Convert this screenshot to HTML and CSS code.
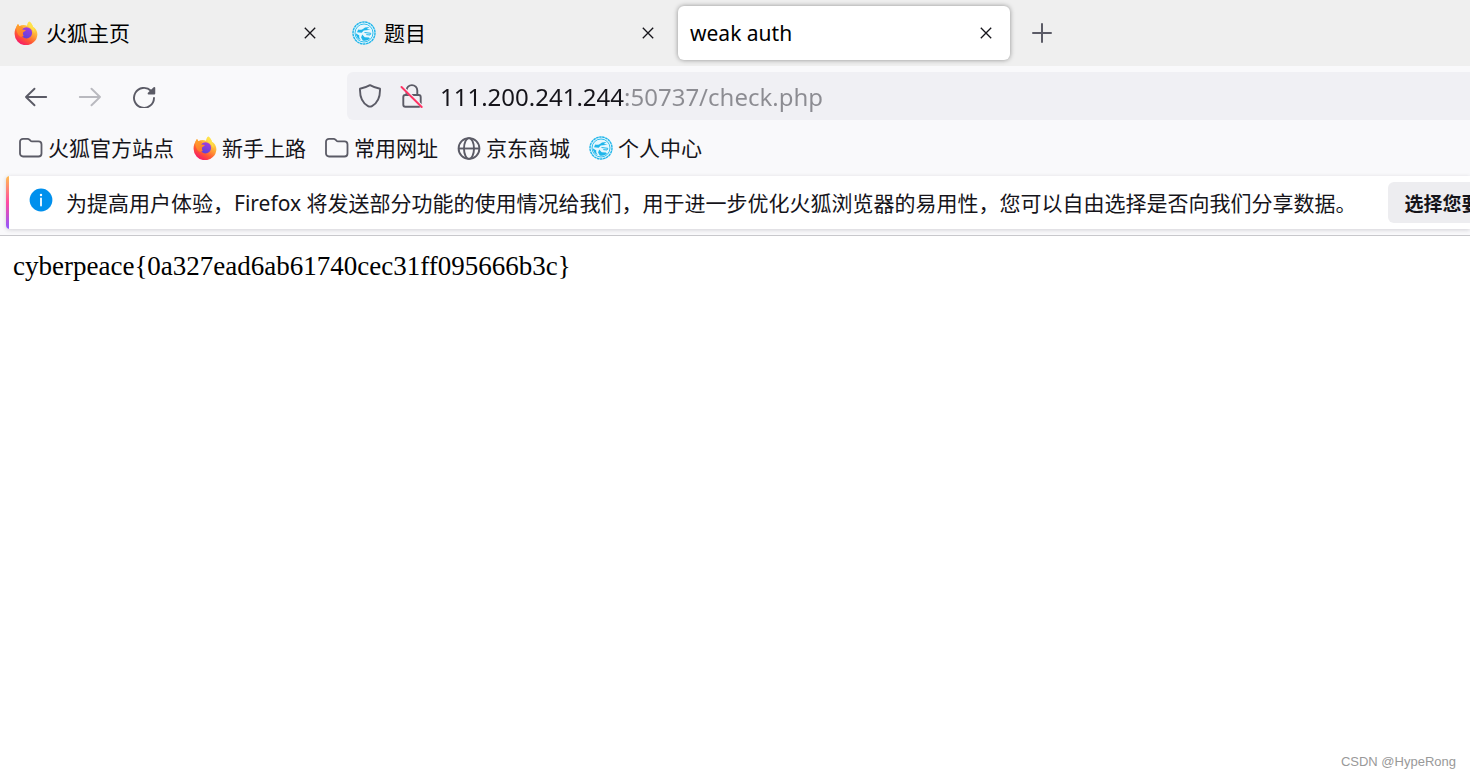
FILE: index.html
```html
<!DOCTYPE html>
<html lang="zh-CN">
<head>
    <meta charset="UTF-8">
    <meta name="viewport" content="width=device-width, initial-scale=1.0">
    <title>weak auth</title>
    <link rel="stylesheet" href="styles.css">
</head>
<body>
    <!-- shared icons -->
    <svg class="sprite" width="0" height="0" aria-hidden="true">
        <defs>
            <linearGradient id="fxBody" x1="0.85" y1="0.1" x2="0.3" y2="1">
                <stop offset="0" stop-color="#fff44f"/>
                <stop offset="0.4" stop-color="#ffa436"/>
                <stop offset="0.7" stop-color="#ff5634"/>
                <stop offset="1" stop-color="#f5156c"/>
            </linearGradient>
            <linearGradient id="fxFox" x1="0" y1="0" x2="0.3" y2="1">
                <stop offset="0" stop-color="#ffa72b"/>
                <stop offset="1" stop-color="#ff7a2c"/>
            </linearGradient>
            <linearGradient id="fxGlobe" x1="0.7" y1="0" x2="0.3" y2="1">
                <stop offset="0" stop-color="#a43be0"/>
                <stop offset="1" stop-color="#5b42d8"/>
            </linearGradient>
        </defs>
        <symbol id="firefox" viewBox="0 0 24 24">
            <path fill="url(#fxBody)" d="M15.200.4c2.600 1.700 3.300 3.800 3.700 5.300 2.700 1.300 4.500 4.400 4.500 7.500A11.400 11.300 0 0 1 .6 12.600C.5 9.600 1.400 7 2.800 5.200c.2-.9.700-1.700 1.200-2.200l1.300 2.200c2.200-1.400 5.600-1.500 7.800-.4C13.200 2.800 13.900 1.400 15.200.4z"/>
            <circle cx="12.500" cy="11.800" r="5.600" fill="url(#fxGlobe)"/>
            <path fill="url(#fxFox)" d="M2.400 5.400 4 3l1.500 2.300c1.400-.2 2.700.1 3.700.9-.7.700-1 1.400-.9 2.200l3.500.5c-.2 1.200-1.700 1.600-2.600 2.300-.4 1.400-.4 2.500.6 3.800-1.600.4-2.300 1.200-3.700.6C3.500 13.700 2.200 9.800 2.400 5.400z"/>
            <path fill="#ffe14a" fill-opacity=".8" d="M15.200.4c2.600 1.700 3.300 3.800 3.700 5.300 1.500 1.900 2 4.300 1.300 6.900-.7-3.100-2.600-4.800-4.500-6C13.700 4.900 13.900 1.600 15.200.4z"/>
        </symbol>
        <symbol id="seal" viewBox="0 0 24 24">
            <circle cx="12" cy="12" r="11" fill="#e6f7fd" stroke="#1fb5ea" stroke-width="1.400" stroke-dasharray="2.600 .5"/>
            <circle cx="12" cy="12" r="9" fill="none" stroke="#1fb5ea" stroke-width=".9"/>
            <path fill="#1fb5ea" d="M6.200 8.400c2.500 1.100 4.300 0 6.800-2l4.500-.5-2.700 2 3.900.8-7 .9-2 2.100-4.700-.5zM3.800 12.300l3.500 2.200c-.5 1.800.3 3.400 1.900 4.800-3-.9-5.200-3.600-5.400-7zM10.200 13.600l2.500 2.700 4.300.3.900 1.200c-2 1.600-4.700 2.300-7.200 1.600l-1.600-3z"/>
            <path d="M12.500 11.500l6.300.8-.8 1.700-3.700-.4" fill="none" stroke="#1fb5ea" stroke-width="1"/>
        </symbol>
        <symbol id="folder" viewBox="0 0 24 24">
            <path fill="none" stroke="#5b5b66" stroke-width="1.800" stroke-linejoin="round" d="M4 2.800h4.600c.8 0 1.300.3 1.800.8l1.100 1.100c.4.500.8.700 1.500.7h6.500a3 3 0 0 1 3 3v9.100a3 3 0 0 1-3 3H4a3 3 0 0 1-3-3V5.800a3 3 0 0 1 3-3z"/>
        </symbol>
        <symbol id="close" viewBox="0 0 12 12">
            <path d="M.8.8l10.400 10.400M11.200.8.8 11.200" fill="none" stroke="#15141a" stroke-width="1.300"/>
        </symbol>
    </svg>

    <header class="browser">
        <div class="tab-strip">
            <div class="tab">
                <svg class="icon"><use href="#firefox"/></svg>
                <span class="tab-title">火狐主页</span>
                <button class="tab-close" aria-label="关闭"><svg><use href="#close"/></svg></button>
            </div>
            <div class="tab">
                <svg class="icon"><use href="#seal"/></svg>
                <span class="tab-title">题目</span>
                <button class="tab-close" aria-label="关闭"><svg><use href="#close"/></svg></button>
            </div>
            <div class="tab tab-active">
                <span class="tab-title">weak auth</span>
                <button class="tab-close" aria-label="关闭"><svg><use href="#close"/></svg></button>
            </div>
            <button class="new-tab" aria-label="新建标签页">
                <svg width="20" height="20" viewBox="0 0 20 20"><path d="M10 1v18M1 10h18" stroke="#5b5b66" stroke-width="2" stroke-linecap="round"/></svg>
            </button>
        </div>

        <div class="nav-bar">
            <div class="nav-buttons">
                <button class="nav-button" aria-label="后退">
                    <svg class="icon" viewBox="0 0 24 24"><path d="M22.200 13H2M10.500 4.700 2 13l8.500 8.300"/></svg>
                </button>
                <button class="nav-button" aria-label="前进" disabled>
                    <svg class="icon" viewBox="0 0 24 24"><path d="M1.800 13H22M13.500 4.700 22 13l-8.500 8.300"/></svg>
                </button>
                <button class="nav-button" aria-label="刷新">
                    <svg class="icon" viewBox="0 0 24 24"><path d="M22 14a10 10 0 1 1-3-7.300l2.200 2.100"/><path class="solid" d="M22.300 4v5.500h-5.700z"/></svg>
                </button>
            </div>
            <div class="url-bar">
                <svg class="icon" viewBox="0 0 24 24"><path d="M12 1.100c3.200 1.800 6.400 2.900 10 3.600.3 8.100-2.300 14.300-8 17.400-1.300.7-2.700.7-4 0C4.300 19 1.700 12.800 2 4.700c3.600-.7 6.800-1.800 10-3.600z"/></svg>
                <svg class="icon" viewBox="0 0 24 24"><path d="M7.500 11V6.500a5.300 5.300 0 0 1 10.800 0V11M6.300 11h13.400a2 2 0 0 1 2 2v7.700a2 2 0 0 1-2 2H6.300a2 2 0 0 1-2-2V13a2 2 0 0 1 2-2z"/><path class="slash-gap" d="M3.500 3l20 20"/><path class="slash" d="M2.500 3l20.200 20"/></svg>
                <input class="url" type="text" aria-label="网址" value="111.200.241.244:50737/check.php" spellcheck="false">
            </div>
        </div>

        <nav class="bookmarks">
            <a href="#"><svg class="icon"><use href="#folder"/></svg>火狐官方站点</a>
            <a href="#"><svg class="icon"><use href="#firefox"/></svg>新手上路</a>
            <a href="#"><svg class="icon"><use href="#folder"/></svg>常用网址</a>
            <a href="#">
                <svg class="icon" viewBox="0 0 24 24" fill="none" stroke="#5b5b66" stroke-width="1.900"><circle cx="12" cy="12.500" r="10.400"/><ellipse cx="12" cy="12.500" rx="5" ry="10.400"/><path d="M1.600 12.500h20.800"/></svg>京东商城</a>
            <a href="#"><svg class="icon"><use href="#seal"/></svg>个人中心</a>
        </nav>

        <div class="notice">
            <svg class="icon notice-icon" viewBox="0 0 24 24"><circle cx="12" cy="12" r="11.400" fill="#0090ed"/><path d="M12 10.500v7" stroke="#fff" stroke-width="1.800" stroke-linecap="round"/><circle cx="12" cy="7" r="1.200" fill="#fff"/></svg>
            <p class="notice-text">为提高用户体验，Firefox 将发送部分功能的使用情况给我们，用于进一步优化火狐浏览器的易用性，您可以自由选择是否向我们分享数据。</p>
            <button class="notice-button">选择您要</button>
        </div>
    </header>

    <main class="page">cyberpeace{0a327ead6ab61740cec31ff095666b3c}</main>

    <footer class="watermark">CSDN @HypeRong</footer>
</body>
</html>
```

FILE: styles.css
```css
* {
    box-sizing: border-box;
}
body {
    margin: 0;
    min-height: 100vh;
    display: flex;
    flex-direction: column;
    overflow: hidden;
    background: #fff;
    color: #15141a;
    font-family: "Noto Sans", "Noto Sans CJK SC", sans-serif;
    font-size: 21px;
}
button {
    border: none;
    padding: 0;
    background: none;
    font-family: inherit;
}
.sprite {
    position: absolute;
}
.icon {
    width: 24px;
    height: 24px;
    flex: none;
}
.browser {
    background: #f9f9fb;
    border-bottom: 1px solid #c8c8cc;
    padding-bottom: 6px;
}

/* tabs */
.tab-strip {
    display: flex;
    align-items: center;
    gap: 6px;
    height: 66px;
    padding: 0 2px;
    background: #efefef;
}
.tab {
    display: flex;
    align-items: center;
    gap: 8px;
    width: 332px;
    height: 54px;
    padding: 0 18px 0 12px;
    border-radius: 6px;
    color: #000;
}
.tab-active {
    background: #fff;
    box-shadow: 0 0 5px rgba(0, 0, 0, 0.4);
}
.tab-title {
    flex: 1;
    line-height: 30px;
}
.tab-close svg {
    display: block;
    width: 12px;
    height: 12px;
}
.new-tab {
    margin-left: 16px;
}
.new-tab svg {
    display: block;
}

/* address row */
.nav-bar {
    display: flex;
    align-items: center;
    padding: 6px 0 6px 24px;
}
.nav-buttons {
    display: flex;
    gap: 30px;
    width: 323px;
}
.nav-button svg {
    display: block;
}
.nav-button path,
.url-bar path {
    fill: none;
    stroke: #5b5b66;
    stroke-width: 1.9;
    stroke-linecap: round;
    stroke-linejoin: round;
}
.nav-button .solid {
    fill: #5b5b66;
}
.nav-button:disabled {
    opacity: 0.4;
}
.url-bar {
    flex: 1;
    display: flex;
    align-items: center;
    gap: 17px;
    height: 48px;
    padding-left: 11px;
    border-radius: 6px 0 0 6px;
    background: #f0f0f4;
}
.url-bar .slash-gap {
    stroke: #f0f0f4;
    stroke-width: 3;
}
.url-bar .slash {
    stroke: #ff3363;
}
.url {
    flex: 1;
    min-width: 0;
    height: 40px;
    padding: 0;
    border: none;
    outline: none;
    font-family: inherit;
    font-size: 24px;
    /* host dark, port and path grey */
    color: transparent;
    background: linear-gradient(90deg, #15141a 184px, #8c8c92 184px);
    -webkit-background-clip: text;
    background-clip: text;
}

/* bookmarks */
.bookmarks {
    display: flex;
    gap: 19px;
    padding: 6px 19px 12px;
    line-height: 32px;
}
.bookmarks a {
    display: flex;
    align-items: center;
    gap: 5px;
    color: #15141a;
    text-decoration: none;
    white-space: nowrap;
}

/* notification */
.notice {
    position: relative;
    display: flex;
    align-items: center;
    height: 53px;
    margin-left: 6px;
    padding-left: 23px;
    overflow: hidden;
    border-radius: 4px 0 0 4px;
    background: #fff;
    box-shadow: 0 1px 4px rgba(58, 57, 68, 0.2);
}
.notice::before {
    content: "";
    position: absolute;
    inset: 0 auto 0 0;
    width: 3px;
    background: linear-gradient(#ffbd4f, #ff4aa2 50%, #9059ff);
}
.notice-icon {
    margin-bottom: 5px;
}
.notice-text {
    flex: none;
    margin: 0 31px 0 13px;
    line-height: 30px;
    white-space: nowrap;
}
.notice-button {
    flex: none;
    height: 41px;
    padding: 0 17px;
    border-radius: 6px;
    background: #ededf0;
    color: #15141a;
    font-size: 19px;
    font-weight: 700;
}

.page {
    flex: 1;
    padding: 14px 13px;
    color: #000;
    font-family: "Liberation Serif", serif;
    font-size: 27px;
    line-height: 32px;
}
.watermark {
    padding: 0 14px 8px;
    color: #999;
    font-family: "Liberation Sans", sans-serif;
    font-size: 13px;
    line-height: 18px;
    text-align: right;
}
```
